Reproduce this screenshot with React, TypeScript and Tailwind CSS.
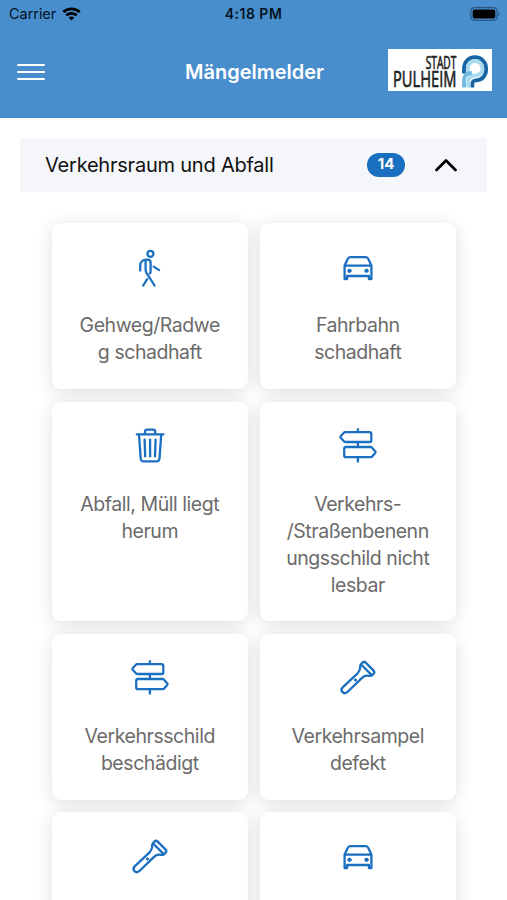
import React from 'react';

type IconName = 'walk' | 'car' | 'trash' | 'sign' | 'torch';

interface Category {
    icon: IconName;
    lines: string[];
}

const categories: Category[] = [
    { icon: 'walk', lines: ['Gehweg/Radwe', 'g schadhaft'] },
    { icon: 'car', lines: ['Fahrbahn', 'schadhaft'] },
    { icon: 'trash', lines: ['Abfall, Müll liegt', 'herum'] },
    { icon: 'sign', lines: ['Verkehrs-', '/Straßenbenenn', 'ungsschild nicht', 'lesbar'] },
    { icon: 'sign', lines: ['Verkehrsschild', 'beschädigt'] },
    { icon: 'torch', lines: ['Verkehrsampel', 'defekt'] },
    { icon: 'torch', lines: [] },
    { icon: 'car', lines: [] },
];

const iconShapes: Record<IconName, React.ReactNode> = {
    walk: (
        <>
            <circle cx="20.4" cy="4.8" r="3" />
            <path d="M10.2 21.6v-5.4c0-3 2.8-5.6 5.8-5.6h1.6c1.7 0 3 1.2 3 2.9v8.9c0 .8-.2 1.4-.7 2M15.6 11v9.8c0 1.3.4 2.2 1 3.3l8 12.4M17.2 30.2l-4 6.3M23.7 17.6l5.4 3.5" />
        </>
    ),
    car: (
        <>
            <path d="M6.6 16.6 9.7 9.9c.5-1.2 1.3-1.8 2.5-1.8h15.6c1.2 0 2 .6 2.5 1.8l3.1 6.7v13.4h-2.5v-3H9.1v3H6.6zM7 16.6h26" />
            <circle cx="11.5" cy="21.8" r="1.7" fill="currentColor" strokeWidth="1" />
            <circle cx="28.5" cy="21.8" r="1.7" fill="currentColor" strokeWidth="1" />
        </>
    ),
    trash: (
        <>
            <path d="M6.8 7.4h26.6M9 7.6l1.7 23.9c.2 1.9 1.1 2.9 2.9 2.9h13c1.8 0 2.7-1 2.9-2.9l1.7-23.9M15 7.2V4.8C15 3.5 15.8 2.7 17 2.7h6.2c1.2 0 2 .8 2 2.1v2.4" />
            <path d="m14.6 12.6.6 16.8M20.1 12.6v16.8M25.6 12.6 25 29.4" />
        </>
    ),
    sign: (
        <path d="M19.9 2.2v2.9M19.9 15v5M19.9 30.2v4.5M7.3 5.1h24.2c1.2 0 1.8.6 1.8 1.8v6.3c0 1.2-.6 1.8-1.8 1.8H7.3c-.6 0-1-.2-1.4-.7l-3.2-3.5c-.4-.5-.4-1 0-1.5l3.2-3.5c.4-.5.8-.7 1.4-.7zM32.7 20H8c-1.2 0-1.8.6-1.8 1.8v6.6c0 1.2.6 1.8 1.8 1.8h24.7c.6 0 1-.2 1.4-.7l3.2-3.6c.4-.5.4-1 0-1.5l-3.2-3.7c-.4-.5-.8-.7-1.4-.7z" />
    ),
    torch: (
        <>
            <path d="m22.9 5.2 1.6-1.6c1-1 2.2-1 3.2 0l7.9 8c1 1 1 2.2 0 3.2L34 16.4zM22.9 5.2c-1.2 1.2-.6 2.2-.8 3.8-.2 2.2-.9 3.7-2.5 5.3L4.9 28.1c-1.8 1.7-1.9 3.4-.4 5s3.4 1.5 5.2-.3l14.6-14.1c1.6-1.6 3.1-2.1 5-2 1.8.1 3.4.8 4.7-.3" />
            <circle cx="17.4" cy="21" r="1.1" fill="currentColor" strokeWidth="1" />
        </>
    ),
};

const CategoryIcon: React.FC<{ name: IconName }> = ({ name }) => (
    <svg
        viewBox="0 0 40 40"
        className="w-10 h-10 text-[#1b6fc0]"
        fill="none"
        stroke="currentColor"
        strokeWidth="2.3"
        strokeLinecap="round"
        strokeLinejoin="round"
    >
        {iconShapes[name]}
    </svg>
);

const StatusBar: React.FC = () => (
    <div className="grid grid-cols-3 items-center h-[27px] pl-[9px] pr-[6px] text-[#06131f]">
        <div className="flex items-center gap-[6px]">
            <span className="text-[14.5px] tracking-[-0.05px]">Carrier</span>
            <svg viewBox="0 0 20 15" className="w-[19px] h-[14px]" fill="none" stroke="#000" strokeWidth="2.9">
                <path d="M1.2 5.4c5-4.6 12.6-4.6 17.6 0M4.4 8.9c3.2-2.9 8-2.9 11.2 0" />
                <path d="M10 14.4 6.9 11.3c1.8-1.6 4.4-1.6 6.2 0z" fill="#000" stroke="none" />
            </svg>
        </div>
        <span className="-ml-[3px] text-center text-[14px] font-semibold tracking-[0.5px]">4:18 PM</span>
        <svg viewBox="0 0 31 14" className="justify-self-end w-[31px] h-[14px]">
            <rect x=".8" y=".6" width="26.4" height="12.8" rx="4" fill="none" stroke="#28557f" strokeWidth="1.2" />
            <rect x="2.7" y="2.5" width="22.6" height="9" rx="2" fill="#000" />
            <path d="M28.6 4.8c1.6.8 1.6 3.6 0 4.4z" fill="#28557f" />
        </svg>
    </div>
);

const CityLogo: React.FC = () => (
    <svg viewBox="0 0 104 42" className="w-[104px] h-[42px] overflow-visible bg-white" fontFamily="'Open Sans', sans-serif" fill="#222">
        <g stroke="#222" strokeWidth="0.7">
            <text x="37.8" y="19.6" fontSize="17.5" textLength="30.5" lengthAdjust="spacingAndGlyphs">STADT</text>
            <text x="5" y="38.2" fontSize="22.5" textLength="63.5" lengthAdjust="spacingAndGlyphs">PULHEIM</text>
        </g>
        <g fill="none">
            <path d="M84.4 38.4v-3.2c0-2.6 1.2-3.9 3.6-3.9 6.2 0 10.2-4.7 10.2-11.2 0-6.6-4.4-11.9-11.2-11.9s-11 5.1-11 11.4v5" stroke="#1766a3" strokeWidth="3.8" />
            <path d="M80.2 38.4v-5.8c0-4 2-6 6-6 4.8 0 8.2-2.2 8.2-6.8 0-4.4-2.9-7.8-7.2-7.8s-7.3 3.2-7.3 7.4v4" stroke="#a9dbf0" strokeWidth="3.8" />
            <path d="M76 38.4V31c0-4.6 3-7 7.8-7" stroke="#72b9df" strokeWidth="3.8" />
        </g>
    </svg>
);

const App: React.FC = () => {
    return (
        <div className="w-full h-[900px] overflow-hidden bg-white font-['Inter','Liberation_Sans',sans-serif]">
            <header className="h-[117.5px] bg-[#488ecd]">
                <StatusBar />
                <div className="grid grid-cols-[1fr_auto_1fr] items-center h-[88px] pl-[17px] pr-[15px] pb-[3px]">
                    <button aria-label="Menu" className="flex flex-col gap-[5px] w-7 mt-[5px]">
                        <span className="h-[2.3px] rounded-full bg-white" />
                        <span className="h-[2.3px] rounded-full bg-white" />
                        <span className="h-[2.3px] rounded-full bg-white" />
                    </button>
                    <h1 className="mt-[5px] text-[20px] font-semibold text-white">Mängelmelder</h1>
                    <div className="justify-self-end">
                        <CityLogo />
                    </div>
                </div>
            </header>

            <main className="px-5 pt-5">
                <button className="flex items-center w-full h-[54px] pl-[25px] pr-[29px] bg-[#f4f6fa]">
                    <span className="text-[20px] tracking-[-0.22px] text-[#111]">Verkehrsraum und Abfall</span>
                    <span className="ml-auto flex items-center justify-center w-[38px] h-6 rounded-full bg-[#1b6fc0] text-[15px] font-bold text-white">
                        14
                    </span>
                    <svg viewBox="0 0 24 16" className="ml-[29px] w-6 h-4" fill="none" stroke="#000" strokeWidth="2.8" strokeLinecap="round" strokeLinejoin="round">
                        <path d="M2.5 13 12 3.5l9.5 9.5" />
                    </svg>
                </button>

                <div className="grid grid-cols-[195.5px_195.5px] gap-[12.5px] pl-8 pt-[31.5px]">
                    {categories.map((category, index) => (
                        <div
                            key={index}
                            className="flex flex-col items-center min-h-[166px] pt-[25.5px] pb-[22.5px] rounded-[9px] bg-white shadow-[0_3px_18px_rgba(0,0,0,0.13)]"
                        >
                            <CategoryIcon name={category.icon} />
                            <p className="mt-[23.5px] text-center text-[19.5px] leading-[27px] tracking-[-0.45px] text-[#6b6b6b] whitespace-nowrap">
                                {category.lines.map((line) => (
                                    <span key={line} className="block">{line}</span>
                                ))}
                            </p>
                        </div>
                    ))}
                </div>
            </main>
        </div>
    );
};

export default App;
